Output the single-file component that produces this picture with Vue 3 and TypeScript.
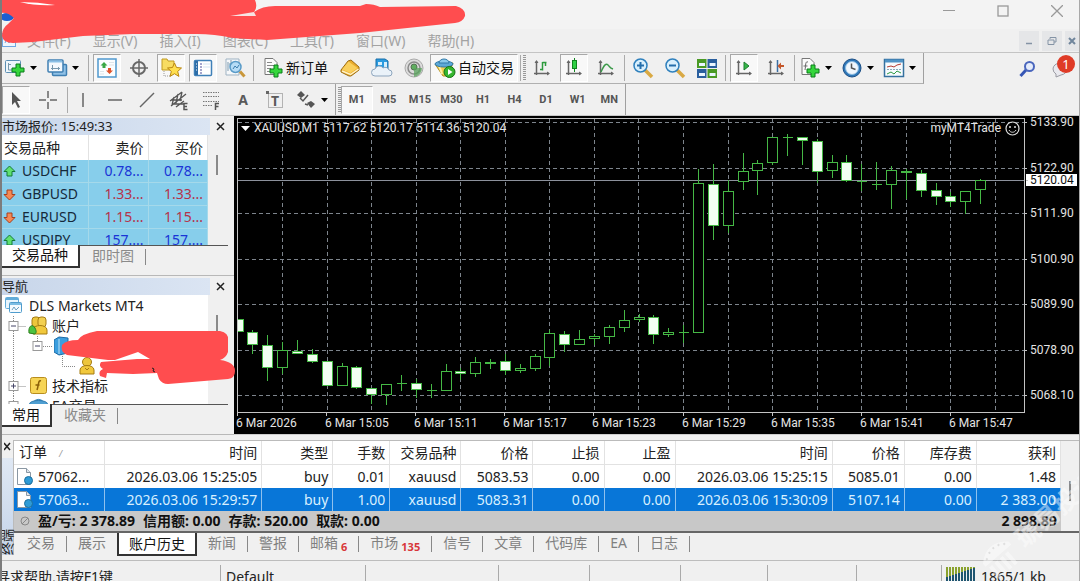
<script setup lang="ts">
interface Tool {
  id: string
  label: string
  icon?: string
  text?: string
  caret?: boolean
  pressed?: boolean
  kind?: 'sep' | 'grip'
}

const sep = (id: string): Tool => ({ id, label: '', kind: 'sep' })

const plus = (x: number, y: number) =>
  `<path d="M${x} ${y}h4v4h4v4h-4v4h-4v-4h-4v-4h4z" fill="#35d63c" stroke="#0b7d1b"/>`
const axes = '<path d="M5.500 4v14M3 16.500h15" stroke="#666" fill="none" stroke-width="1.500"/><path d="M3.500 6l2-3 2 3zM16 14.500l3 2-3 2z" fill="#666"/>'

const icons: Record<string, string> = {
  newChart: '<rect x="1.500" y="3.500" width="15" height="12" rx="1" fill="#eef6fb" stroke="#5b8fb4"/><path d="M4.500 6v7h9M4 7.500h3M11 11.500v3" stroke="#7798ad" fill="none"/>' + plus(12, 7),
  profiles: '<rect x="6.500" y="7.500" width="14" height="11" rx="1" fill="#8fc0e6" stroke="#3f7fb2" stroke-width="1.500"/><rect x="2" y="3" width="15" height="12" rx="1" fill="#f4f9fd" stroke="#3f7fb2" stroke-width="1.500"/><path d="M3 4.500h13" stroke="#8bc0e6" stroke-width="2"/><path d="M5 11.500h9M6.500 8v5M12.500 10v3" stroke="#7798ad"/>',
  market: '<rect x="2" y="2" width="18" height="18" fill="#fafdff" stroke="#4f98ce" stroke-width="1.500"/><path d="M8 5l3.500 3.500H9.500V11h-3V8.500H4.500z" fill="#38a745"/><path d="M13.500 17L10 13.500h2V11h3v2.500h2z" fill="#e0532b"/><path d="M4 14.500h4M4 17h4M13 5.500h5M13 8h5" stroke="#dde4e9"/>',
  cross: '<circle cx="11" cy="11" r="6" fill="none" stroke="#686868" stroke-width="2"/><path d="M11 2v18M2 11h18" stroke="#686868" stroke-width="1.500"/>',
  folderStar: '<path d="M2 2h5l1 2h6v9H2z" fill="#f7dc62" stroke="#c09a22"/><path d="M4 14v5h6" stroke="#999" fill="none" stroke-dasharray="1 1"/><path d="M14.500 6l2 4.500 5 .5-3.800 3.400 1.200 5-4.400-2.700-4.400 2.700 1.200-5L7.500 11l5-.5z" fill="#ffdf4e" stroke="#b98611"/>',
  terminal: '<rect x="2.500" y="3.500" width="17" height="15" rx="1" fill="#fff" stroke="#3f80b8" stroke-width="1.500"/><path d="M4.500 4v14" stroke="#2d6ea9" stroke-width="3"/><path d="M4 7h1M4 10h1M4 13h1" stroke="#fff"/><path d="M8 7h2M8 10h2M8 13h2M8 16h2" stroke="#4c4c9a"/><path d="M11 7h7M11 10h7" stroke="#d3e4f1"/>',
  tester: '<path d="M2 2h13v16H2z" fill="#f6f8fa" stroke="#9fb3c3"/><path d="M4 5v9M7 3v8M5 7h4" stroke="#7d99ad"/><circle cx="11.500" cy="10" r="5.500" fill="#b6dcf6" stroke="#5a9bc8" stroke-width="1.500"/><path d="M9 12l2-3 2 2 2-3" stroke="#3d7fae" fill="none"/><path d="M16 14.500l4.500 5" stroke="#c9973a" stroke-width="3"/>',
  order: '<path d="M3 1.500h8l4 4v12H3z" fill="#fbfbfb" stroke="#777"/><path d="M5 5.500h5M5 8.500h7M5 11.500h4M5 14.500h3" stroke="#888"/>' + plus(12, 8),
  book: '<path d="M2 13L9 4l3-1 8 7v3l-8 6-2 0-8-4z" fill="#e9ab2c" stroke="#9c6c12"/><path d="M3 12.500L9.500 4.500 18.500 11l-7 5z" fill="#f9cf5c"/><path d="M3 14l8.500 3.500L19.500 12" stroke="#fff3c9" fill="none" stroke-width="1.500"/>',
  cloud: '<path d="M5 2h9l3 2v11H5z" fill="#2a9be0" stroke="#196ea8"/><path d="M7 5h4v3H7zM13 5h3v5h-3" fill="#d7effc"/><path d="M4 19a3.500 3.500 0 0 1 0-7 4.500 4.500 0 0 1 8-1 4 4 0 0 1 6 2 3 3 0 0 1 0 6z" fill="#eaf2f9" stroke="#8da5bd"/>',
  signal: '<circle cx="11" cy="11" r="9" fill="#dcdcdc" stroke="#a9a9a9"/><circle cx="11" cy="11" r="6" fill="none" stroke="#8b8b8b" stroke-width="1.500"/><circle cx="11" cy="10" r="3" fill="#5fae5f" stroke="#557055"/><path d="M11 11v9a9 9 0 0 0 8-9z" fill="#58a35c" opacity=".75"/>',
  robot: '<path d="M1 7l18-1-5 13H9z" fill="#f4cf51" stroke="#b28e20"/><path d="M5 8l3 9" stroke="#fff0a8" stroke-width="2"/><ellipse cx="10" cy="7" rx="9" ry="3" fill="#5da9d8" stroke="#2f79a8"/><path d="M5 6a5 4 0 0 1 10 0z" fill="#8bcaed" stroke="#2f79a8"/><circle cx="15.500" cy="15" r="5.500" fill="#35b52f" stroke="#157414"/><path d="M14 12l4.500 3-4.500 3z" fill="#fff"/>',
  bars: axes + '<path d="M11.500 13.500V5M11.500 5.500h4M9 12.500h3M14.500 5v4" stroke="#2c9a3c" stroke-width="1.500" fill="none"/>',
  candles: axes + '<path d="M11.500 1v14" stroke="#11851f"/><rect x="9.500" y="3.500" width="4" height="8" fill="#2fd044" stroke="#11851f"/>',
  line: axes + '<path d="M6 15c3-7 5-9 7-7s2 3 5 4" stroke="#3d9a4b" stroke-width="1.500" fill="none"/>',
  zoomIn: '<path d="M13 13l7 7" stroke="#d9a944" stroke-width="3.500"/><circle cx="8.500" cy="8.500" r="6.500" fill="#d9f0fd" stroke="#2f80bd" stroke-width="1.500"/><path d="M8.500 5v7M5 8.500h7" stroke="#256fac" stroke-width="2"/>',
  zoomOut: '<path d="M13 13l7 7" stroke="#d9a944" stroke-width="3.500"/><circle cx="8.500" cy="8.500" r="6.500" fill="#d9f0fd" stroke="#2f80bd" stroke-width="1.500"/><path d="M5 8.500h7" stroke="#256fac" stroke-width="2"/>',
  tile: '<rect x="1" y="2" width="9.500" height="9" fill="#4a9a25"/><rect x="11.500" y="2" width="9.500" height="9" fill="#2a5f9e"/><rect x="1" y="12" width="9.500" height="9" fill="#2a5f9e"/><rect x="11.500" y="12" width="9.500" height="9" fill="#4a9a25"/><path d="M3 6h6v3H3zM13.500 6h6v3h-6zM3 16h6v3H3zM13.500 16h6v3h-6z" fill="#eaf5ff"/>',
  scroll: axes + '<path d="M11 5l5 4-5 4z" fill="#35b648" stroke="#1f7f30"/>',
  shift: axes + '<path d="M12.500 3v12" stroke="#3a6ea3" stroke-width="1.500"/><path d="M19 9h-4" stroke="#c4562a" stroke-width="2"/><path d="M16 5.500v7L12.500 9z" fill="#c4562a"/>',
  indicators: '<path d="M3 1.500h8l4 4v12H3z" fill="#fbfbfb" stroke="#777"/><path d="M9 5c-3-1-2 3-3 8M4.500 9h4" stroke="#666" fill="none"/>' + plus(12, 8),
  clock: '<circle cx="11" cy="11" r="9" fill="#2e77b8" stroke="#1c4f86"/><circle cx="11" cy="11" r="6.500" fill="#f0f7fd" stroke="#8dbce2"/><path d="M10.500 6.500V11l4 1.500" stroke="#555" stroke-width="1.500" fill="none"/>',
  template: '<rect x="1.500" y="2.500" width="19" height="17" fill="#f7fbfe" stroke="#35719f" stroke-width="1.500"/><path d="M2 4h18" stroke="#4f93c6" stroke-width="3"/><path d="M4 10l4-1 3 1 3-2 4-1" stroke="#b43b32" fill="none"/><path d="M4 12.500h14" stroke="#8ab" stroke-dasharray="2 1"/><path d="M4 17l4-2 3 2 3-3 4 2" stroke="#2f9a43" fill="none"/>',
  cursor: '<path d="M7 3v13l3-3 3 6 2-1-3-6h4z" fill="#555"/>',
  thinCross: '<path d="M11 2v7M11 13v7M2 11h7M13 11h7" stroke="#666" stroke-width="1.500"/>',
  vline: '<path d="M11 4v14" stroke="#666" stroke-width="1.500"/>',
  hline: '<path d="M4 11h14" stroke="#666" stroke-width="1.500"/>',
  trend: '<path d="M4 18L18 4" stroke="#666" stroke-width="1.500"/>',
  channel: '<path d="M2 12L14 3M3 17L18 5M8 18l8-6M6 8l-2 8M10 5L8 14M14 3l-2 9M3 11h11M5 15h11" stroke="#555" stroke-width="1.300" fill="none"/><path d="M19.500 14.500H16v6h3.500M16 17.500h3" stroke="#555" fill="none" stroke-width="1.500"/>',
  fibo: '<path d="M3 3.500h16M3 7.500h16M3 12.500h16M3 16.500h9" stroke="#777" stroke-dasharray="1.500 1"/><path d="M15.500 21v-6.500H19M15.500 17.500h3" stroke="#555" fill="none" stroke-width="1.500"/>',
  textBox: '<rect x="4.500" y="4.500" width="14" height="14" fill="none" stroke="#777" stroke-dasharray="1 1"/><rect x="2" y="2" width="3" height="3" fill="#666"/>',
  shapes: '<path d="M2 6l4-4 4 4-4 3zM12 14l4-2 4 3-4 4z" fill="#555"/><path d="M5 9l3 3 5-6M10 15l3 1" stroke="#555" fill="none" stroke-width="1.500"/>',
}

const mainTools: Tool[] = [
  { id: 'newChart', label: '新图表', icon: 'newChart', caret: true },
  { id: 'profiles', label: '配置文件', icon: 'profiles', caret: true },
  sep('s1'),
  { id: 'market', label: '市场报价', icon: 'market', pressed: true },
  { id: 'data', label: '数据窗口', icon: 'cross' },
  { id: 'nav', label: '导航', icon: 'folderStar', pressed: true },
  { id: 'term', label: '终端', icon: 'terminal', pressed: true },
  { id: 'tester', label: '策略测试', icon: 'tester' },
  sep('s2'),
  { id: 'order', label: '新订单', icon: 'order', text: '新订单' },
  { id: 'book', label: '编辑器', icon: 'book' },
  { id: 'cloud', label: '托管', icon: 'cloud' },
  { id: 'signal', label: '信号', icon: 'signal' },
  { id: 'auto', label: '自动交易', icon: 'robot', text: '自动交易', pressed: true },
  sep('s3'),
  { id: 'g1', label: '', kind: 'grip' },
  { id: 'bars', label: '柱状图', icon: 'bars' },
  { id: 'candles', label: '蜡烛图', icon: 'candles', pressed: true },
  { id: 'line', label: '折线图', icon: 'line' },
  sep('s4'),
  { id: 'zoomIn', label: '放大', icon: 'zoomIn' },
  { id: 'zoomOut', label: '缩小', icon: 'zoomOut' },
  { id: 'tile', label: '平铺窗口', icon: 'tile' },
  sep('s5'),
  { id: 'scroll', label: '自动滚动', icon: 'scroll', pressed: true },
  { id: 'shift', label: '图表平移', icon: 'shift' },
  sep('s6'),
  { id: 'indicators', label: '指标', icon: 'indicators', caret: true },
  { id: 'clock', label: '时间周期', icon: 'clock', caret: true },
  { id: 'template', label: '模板', icon: 'template', caret: true },
]

const drawTools: Tool[] = [
  { id: 'cursor', label: '光标', icon: 'cursor', pressed: true },
  { id: 'thin', label: '十字线', icon: 'thinCross' },
  sep('d1'),
  { id: 'vline', label: '垂直线', icon: 'vline' },
  { id: 'hline', label: '水平线', icon: 'hline' },
  { id: 'trend', label: '趋势线', icon: 'trend' },
  { id: 'channel', label: '通道', icon: 'channel' },
  { id: 'fibo', label: '斐波那契', icon: 'fibo' },
  { id: 'text', label: '文字', text: 'A' },
  { id: 'textBox', label: '文字标签', icon: 'textBox', text: 'T' },
  { id: 'shapes', label: '箭头', icon: 'shapes', caret: true },
]

const menus = ['文件(F)', '显示(V)', '插入(I)', '图表(C)', '工具(T)', '窗口(W)', '帮助(H)']
const frames = ['M1', 'M5', 'M15', 'M30', 'H1', 'H4', 'D1', 'W1', 'MN']

const quotes = [
  { name: 'USDCHF', up: true, bid: '0.78...', ask: '0.78...' },
  { name: 'GBPUSD', up: false, bid: '1.33...', ask: '1.33...' },
  { name: 'EURUSD', up: false, bid: '1.15...', ask: '1.15...' },
  { name: 'USDJPY', up: true, bid: '157....', ask: '157....' },
]

// Plot box in chart units
const plot = { x: 237, y: 118, w: 788, h: 295 }
const priceLine = 180

// box top, box bottom, wick top, wick bottom, filled
type Row = [number, number, number, number, 0 | 1]
const rows: Row[] = [
  [319, 332, 319, 332, 1], [332, 345, 330, 354, 1], [345, 368, 335, 381, 1], [350, 368, 342, 374, 0],
  [351, 354, 340, 354, 1], [354, 362, 349, 363, 1], [361, 386, 361, 386, 1], [366, 386, 363, 386, 0],
  [367, 388, 366, 389, 1], [388, 395, 388, 404, 1], [384, 395, 384, 405, 0], [383, 384, 375, 391, 0],
  [383, 390, 379, 398, 1], [390, 391, 384, 398, 0], [371, 391, 364, 391, 0], [371, 374, 368, 380, 1],
  [362, 374, 357, 377, 0], [362, 364, 359, 369, 1], [361, 371, 354, 375, 1], [368, 371, 364, 373, 0],
  [356, 369, 354, 371, 0], [333, 358, 330, 366, 0], [334, 345, 331, 352, 1], [339, 345, 330, 345, 0],
  [336, 339, 334, 345, 0], [327, 337, 325, 344, 0], [320, 328, 310, 332, 0], [317, 320, 314, 322, 0],
  [317, 335, 315, 344, 1], [332, 335, 328, 337, 0], [332, 333, 325, 343, 0], [183, 333, 169, 333, 0],
  [184, 226, 164, 240, 1], [191, 226, 180, 233, 0], [171, 182, 153, 190, 0], [163, 171, 160, 195, 0],
  [137, 163, 137, 165, 0], [137, 138, 134, 156, 0], [137, 141, 137, 165, 1], [141, 172, 139, 183, 1],
  [162, 171, 155, 178, 0], [162, 181, 155, 182, 1], [181, 182, 164, 191, 0], [184, 185, 162, 190, 0],
  [170, 185, 166, 209, 0], [171, 173, 169, 199, 1], [173, 191, 170, 197, 1], [190, 197, 183, 205, 1],
  [196, 202, 192, 207, 1], [191, 202, 191, 214, 0], [180, 190, 179, 204, 0],
]
const candles = rows.map((r, i) => ({
  x: Math.round(237.600 + i * 14.85),
  top: r[0],
  bottom: r[1],
  high: r[2],
  low: r[3],
  filled: r[4] === 1,
}))

const gridX = Array.from({ length: 17 }, (_, i) => Math.round(282 + i * 44.55))
const prices = ['5133.90', '5122.90', '5111.90', '5100.90', '5089.90', '5078.90', '5068.10'].map((text, i) => ({
  text,
  y: Math.round(122 + i * 45.5),
}))
const times = ['6 Mar 2026', '6 Mar 15:05', '6 Mar 15:11', '6 Mar 15:17', '6 Mar 15:23', '6 Mar 15:29', '6 Mar 15:35', '6 Mar 15:41', '6 Mar 15:47'].map((text, i) => ({
  text,
  x: Math.round(236 + i * 89.1),
}))
const topOf = (y: number) => ({ top: `${((y - plot.y) / plot.h) * 100}%` })
const leftOf = (x: number) => ({ left: `${((x - plot.x) / plot.w) * 100}%` })

const heads = ['订单', '时间', '类型', '手数', '交易品种', '价格', '止损', '止盈', '时间', '价格', '库存费', '获利']
const orders = [
  ['57062...', '2026.03.06 15:25:05', 'buy', '0.01', 'xauusd', '5083.53', '0.00', '0.00', '2026.03.06 15:25:15', '5085.01', '0.00', '1.48'],
  ['57063...', '2026.03.06 15:29:57', 'buy', '1.00', 'xauusd', '5083.31', '0.00', '0.00', '2026.03.06 15:30:09', '5107.14', '0.00', '2 383.00'],
]
const totals = ['盈/亏: 2 378.89', '信用额: 0.00', '存款: 520.00', '取款: 0.00']
const tabs: { text: string; badge?: string; active?: boolean }[] = [
  { text: '交易' }, { text: '展示' }, { text: '账户历史', active: true }, { text: '新闻' }, { text: '警报' },
  { text: '邮箱', badge: '6' }, { text: '市场', badge: '135' }, { text: '信号' }, { text: '文章' },
  { text: '代码库' }, { text: 'EA' }, { text: '日志' },
]
</script>

<template>
  <div class="window">
    <header class="titlebar">
      <svg class="applogo" width="14" height="14" viewBox="0 0 14 14" aria-hidden="true"><ellipse cx="5" cy="7" rx="7" ry="4" fill="#1d5fd0" /></svg>
      <div class="winbtns">
        <button aria-label="最小化"><svg width="12" height="12"><path d="M0 5.500h12" stroke="#999" /></svg></button>
        <button aria-label="最大化"><svg width="12" height="12"><rect x="1" y="1" width="10" height="10" fill="none" stroke="#999" stroke-width="1.300" /></svg></button>
        <button aria-label="关闭"><svg width="12" height="12"><path d="M0 0l12 12M12 0L0 12" stroke="#999" stroke-width="1.300" /></svg></button>
      </div>
    </header>

    <nav class="menubar">
      <svg width="15" height="15" viewBox="0 0 15 15" aria-hidden="true"><rect x=".5" y=".5" width="13" height="13" fill="#eef5fd" stroke="#6fa6e0" /><path d="M3 10l2-5 2 5 2-5 2 5" stroke="#6fa6e0" fill="none" /></svg>
      <button v-for="m in menus" :key="m" class="menu">{{ m }}</button>
      <div class="mdi">
        <button aria-label="最小化图表"><svg width="10" height="10"><path d="M2 7.500h6" stroke="#8493a5" stroke-width="1.500" /></svg></button>
        <button aria-label="还原图表"><svg width="10" height="10"><path d="M3 3V1.500h6V6H7M1 4h6v4.500H1z" fill="none" stroke="#8493a5" /></svg></button>
        <button aria-label="关闭图表"><svg width="10" height="10"><path d="M2 2l6 6M8 2L2 8" stroke="#71869c" stroke-width="2" /></svg></button>
      </div>
    </nav>

    <div class="toolrow">
      <div class="toolbar main">
        <template v-for="t in mainTools" :key="t.id">
          <span v-if="t.kind" :class="t.kind"></span>
          <button v-else class="tool" :class="{ pressed: t.pressed, wide: t.caret, labelled: t.text }" :aria-label="t.label">
            <svg width="22" height="22" viewBox="0 0 22 22" v-html="icons[t.icon!]"></svg>
            <span v-if="t.text">{{ t.text }}</span>
            <svg v-if="t.caret" class="caret" width="7" height="4" viewBox="0 0 7 4"><path d="M0 0h7L3.500 4z" /></svg>
          </button>
        </template>
      </div>
      <div class="right">
        <button class="flat" aria-label="搜索"><svg width="18" height="18" viewBox="0 0 18 18"><path d="M7 10l-5.500 6" stroke="#3656b5" stroke-width="3" /><circle cx="10.500" cy="6.500" r="4.500" fill="#e5ecfb" stroke="#4a66bd" stroke-width="2" /></svg></button>
        <button class="flat chat" aria-label="消息">
          <svg width="20" height="18" viewBox="0 0 20 18"><path d="M2 9a7 6 0 1 1 8 6l-5 2 0-3a6 6 0 0 1-3-5z" fill="#e9e9ee" stroke="#9a9aa2" /></svg>
          <span class="count">1</span>
        </button>
      </div>
    </div>

    <div class="toolrow second">
      <div class="toolbar draw">
        <template v-for="t in drawTools" :key="t.id">
          <span v-if="t.kind" :class="t.kind"></span>
          <button v-else class="tool" :class="{ pressed: t.pressed, wide: t.caret }" :aria-label="t.label">
            <svg v-if="t.icon" width="22" height="22" viewBox="0 0 22 22" v-html="icons[t.icon]"></svg>
            <span v-if="t.text" class="letter" :class="{ over: t.icon }">{{ t.text }}</span>
            <svg v-if="t.caret" class="caret" width="7" height="4" viewBox="0 0 7 4"><path d="M0 0h7L3.500 4z" /></svg>
          </button>
        </template>
      </div>
      <div class="toolbar frames">
        <span class="grip"></span>
        <div class="framelist">
          <button v-for="(f, i) in frames" :key="f" class="frame" :class="{ pressed: i === 0 }">{{ f }}</button>
        </div>
      </div>
    </div>

    <main class="middle">
      <aside class="side">
        <section class="panel">
          <div class="ptitle">
            <h2>市场报价: 15:49:33</h2>
            <button aria-label="关闭市场报价"><svg width="9" height="9"><path d="M1 1l7 7M8 1L1 8" stroke="#222" stroke-width="1.500" /></svg></button>
          </div>
          <div class="pbody">
            <table class="quotes">
              <colgroup><col class="qname" /><col /><col /></colgroup>
              <thead>
                <tr><th>交易品种</th><th>卖价</th><th>买价</th></tr>
              </thead>
              <tbody>
                <tr v-for="q in quotes" :key="q.name" :class="q.up ? 'up' : 'down'">
                  <td>
                    <svg width="13" height="13" viewBox="0 0 13 13" aria-hidden="true">
                      <path v-if="q.up" d="M6.500 1L12 6.500H9V11H4V6.500H1z" fill="#5fe070" stroke="#137a35" />
                      <path v-else d="M6.500 12L1 6.500h3V2h5v4.500h3z" fill="#f58a55" stroke="#a83e1c" />
                    </svg>
                    <span>{{ q.name }}</span>
                  </td>
                  <td>{{ q.bid }}</td>
                  <td>{{ q.ask }}</td>
                </tr>
              </tbody>
            </table>
            <div class="gutter"><span class="thumb"></span></div>
          </div>
          <div class="ptabs">
            <button class="active">交易品种</button>
            <button>即时图</button>
          </div>
        </section>

        <section class="panel">
          <div class="ptitle">
            <h2>导航</h2>
            <button aria-label="关闭导航"><svg width="9" height="9"><path d="M1 1l7 7M8 1L1 8" stroke="#222" stroke-width="1.500" /></svg></button>
          </div>
          <div class="pbody">
            <ul class="tree">
              <li>
                <svg width="20" height="20" viewBox="0 0 20 20"><rect x="1.500" y="1.500" width="13" height="11" rx="1" fill="#e8f5fd" stroke="#62acd9" /><path d="M2 3h12" stroke="#62acd9" stroke-width="2" /><rect x="5.500" y="6.500" width="12" height="10" rx="1" fill="#f4fafe" stroke="#4f9ccd" /><path d="M6 8h11" stroke="#7cbde3" stroke-width="2" /><path d="M8 14l2-3 2 3 3-3" stroke="#6d9fbf" fill="none" /></svg>
                <span>DLS Markets MT4</span>
              </li>
              <li class="l1">
                <svg width="18" height="20" viewBox="0 0 18 20"><path d="M5.500 0v5M5.500 15v5M10.500 10.500H18" stroke="#888" stroke-dasharray="1 1" /><rect x="1" y="5.500" width="9" height="9" fill="#fff" stroke="#999" /><path d="M3 10h5" stroke="#446" /></svg>
                <svg width="22" height="20" viewBox="0 0 22 20"><rect x="4" y="1" width="8" height="10" rx="3" fill="#edc63c" stroke="#a57c12" /><rect x="10" y="1" width="8" height="10" rx="3" fill="#f3d050" stroke="#a57c12" /><path d="M5 18v-4c0-6 14-6 14 0v4z" fill="#f1c83c" stroke="#a57c12" /><path d="M1 17c-1-8 4-9 6-5s1 5 0 6z" fill="#4cc240" stroke="#2b7d1c" /></svg>
                <span>账户</span>
              </li>
              <li class="l1 l2">
                <svg width="46" height="20" viewBox="0 0 46 20"><path d="M5.500 0v20M29.500 0v6M35 10.500h9" stroke="#888" stroke-dasharray="1 1" fill="none" /><rect x="25" y="5.500" width="9" height="9" fill="#fff" stroke="#999" /><path d="M27 10h5" stroke="#446" /></svg>
                <svg width="18" height="20" viewBox="0 0 18 20"><path d="M0 4l5-3 9 1v15l-9 2-5-3z" fill="#3b9ede" stroke="#1b6aa6" /><path d="M5 3v15" stroke="#bfe2f7" /></svg>
              </li>
              <li class="l1 l2">
                <svg width="70" height="20" viewBox="0 0 70 20"><path d="M5.500 0v20M54.500 0v10.500H68" stroke="#888" stroke-dasharray="1 1" fill="none" /></svg>
                <svg width="18" height="20" viewBox="0 0 18 20"><circle cx="9" cy="6" r="4.500" fill="#edc63c" stroke="#a57c12" /><path d="M2 18v-4c0-6 14-6 14 0v4z" fill="#f1c83c" stroke="#a57c12" /><path d="M7 12l2 2 2-2" stroke="#a57c12" fill="none" /></svg>
              </li>
              <li class="l1">
                <svg width="18" height="20" viewBox="0 0 18 20"><path d="M5.500 0v5M5.500 15v5M10.500 10.500H18" stroke="#888" stroke-dasharray="1 1" /><rect x="1" y="5.500" width="9" height="9" fill="#fff" stroke="#999" /><path d="M3 10h5M5.500 7.500v5" stroke="#446" /></svg>
                <svg width="22" height="20" viewBox="0 0 22 20"><rect x="2.500" y="1.500" width="16" height="16" rx="2" fill="#f6d455" stroke="#b88d1d" /><path d="M13 5c-3-1-2 3-4 9M7.500 9h4" stroke="#8a5f08" stroke-width="1.500" fill="none" /></svg>
                <span>技术指标</span>
              </li>
              <li class="l1">
                <svg width="18" height="20" viewBox="0 0 18 20"><path d="M5.500 0v5M10.500 10.500H18" stroke="#888" stroke-dasharray="1 1" /><rect x="1" y="5.500" width="9" height="9" fill="#fff" stroke="#999" /></svg>
                <svg width="22" height="20" viewBox="0 0 22 20"><path d="M5 7a6 6 0 0 1 11 0z" fill="#69b5e4" stroke="#2d7bb0" /><ellipse cx="10.500" cy="8" rx="9" ry="3.500" fill="#4f9fd2" stroke="#2d7bb0" /></svg>
                <span>EA交易</span>
              </li>
            </ul>
            <div class="gutter"><span class="thumb"></span></div>
          </div>
          <div class="ptabs">
            <button class="active">常用</button>
            <button>收藏夹</button>
          </div>
        </section>
      </aside>

      <section class="chart">
        <div class="plot">
          <svg class="plotsvg" :viewBox="`${plot.x} ${plot.y} ${plot.w} ${plot.h}`" preserveAspectRatio="none" aria-label="XAUUSD M1">
            <g class="grid">
              <path v-for="x in gridX" :key="x" :d="`M${x + 0.5} 119V412`" />
              <path v-for="p in prices" :key="p.y" :d="`M238 ${p.y + 0.5}H1024`" />
            </g>
            <path class="bid" :d="`M238 ${priceLine + 0.5}H1024`" />
            <g v-for="c in candles" :key="c.x" class="candle">
              <path :d="`M${c.x + 0.5} ${c.high}V${c.low}`" />
              <path v-if="c.bottom - c.top < 2" :d="`M${c.x - 4.5} ${c.top + 0.5}h10`" />
              <rect v-else :class="{ filled: c.filled }" :x="c.x - 4.5" :y="c.top + 0.5" width="10" :height="c.bottom - c.top - 1" />
            </g>
            <rect class="edge" x="237.5" y="118.5" width="787" height="294" />
          </svg>
          <div class="cap">
            <svg width="9" height="5" viewBox="0 0 9 5"><path d="M0 0h9L4.500 5z" fill="#fff" /></svg>
            <span>XAUUSD,M1</span>
            <span>5117.62 5120.17 5114.36 5120.04</span>
            <span class="expert">myMT4Trade</span>
            <svg width="15" height="15" viewBox="0 0 15 15"><circle cx="7.500" cy="7.500" r="6.500" fill="none" stroke="#ddd" stroke-width="1.200" /><path d="M5 5v2M10 5v2" stroke="#ddd" stroke-width="1.500" /><path d="M4 9c1.500 3 5.500 3 7 0" stroke="#ddd" fill="none" /></svg>
          </div>
        </div>
        <div class="paxis">
          <span v-for="p in prices" :key="p.text" class="plabel" :style="topOf(p.y)">{{ p.text }}</span>
          <span class="plabel now" :style="topOf(priceLine)">5120.04</span>
        </div>
        <div class="taxis">
          <span v-for="t in times" :key="t.text" class="tlabel" :style="leftOf(t.x)">{{ t.text }}</span>
        </div>
      </section>
    </main>

    <section class="terminal">
      <div class="strip">
        <button aria-label="关闭终端"><svg width="8" height="9"><path d="M0 1l6 7M6 1L0 8" stroke="#222" stroke-width="1.500" /></svg></button>
        <span>终端</span>
      </div>
      <div class="tmain">
        <div class="tarea">
          <table class="orders">
            <colgroup>
              <col class="w92" /><col class="w157" /><col class="w71" /><col class="w57" /><col class="w71" /><col class="w72" />
              <col class="w71" /><col class="w71" /><col class="w157" /><col class="w72" /><col class="w72" /><col class="w84" />
            </colgroup>
            <thead>
              <tr>
                <th v-for="(h, i) in heads" :key="i">{{ h }}<i v-if="i === 0">/</i></th>
              </tr>
            </thead>
            <tbody>
              <tr v-for="(o, r) in orders" :key="r" :class="{ selected: r === 1 }">
                <td v-for="(c, i) in o" :key="i">
                  <svg v-if="i === 0" width="18" height="19" viewBox="0 0 18 19" aria-hidden="true"><path d="M1.500 1.500h9l4 4v12h-13z" fill="#fff" stroke="#8a97a3" /><path d="M10.500 1.500v4h4" fill="#dde5ec" stroke="#8a97a3" /><circle cx="12.500" cy="13.500" r="4" fill="#2e9bd6" stroke="#1b6f9f" /></svg>
                  <span>{{ c }}</span>
                </td>
              </tr>
            </tbody>
            <tfoot>
              <tr>
                <td colspan="11">
                  <div class="sum">
                    <svg width="10" height="10" viewBox="0 0 10 10" aria-hidden="true"><circle cx="5" cy="5" r="4" fill="none" stroke="#888" /><path d="M2 8l6-6" stroke="#888" /></svg>
                    <span v-for="t in totals" :key="t">{{ t }}</span>
                  </div>
                </td>
                <td>2 898.89</td>
              </tr>
            </tfoot>
          </table>
          <div class="gutter"><span class="thumb"></span></div>
        </div>
        <div class="ttabs">
          <button v-for="t in tabs" :key="t.text" :class="{ active: t.active }">{{ t.text }}<b v-if="t.badge">{{ t.badge }}</b></button>
        </div>
      </div>
    </section>

    <footer class="status">
      <span class="help">寻求帮助,请按F1键</span>
      <span class="profile">Default</span>
      <span class="c133"></span><span class="c91"></span><span class="c91"></span><span class="c87"></span><span class="c89"></span><span class="c85"></span>
      <span class="net">
        <svg width="30" height="18" viewBox="0 0 30 18" aria-hidden="true">
          <g v-for="i in 10" :key="i">
            <rect :x="i * 3 - 3" y="0" width="2" height="18" fill="#8aa22e" />
            <rect :x="i * 3 - 3" :y="11 - i" width="2" :height="8 + i" fill="#1f5570" />
          </g>
        </svg>
        1865/1 kb
      </span>
    </footer>

    <svg class="marks" width="470" height="46" viewBox="0 0 470 46" aria-hidden="true">
      <path d="M0 0H255Q258 7 254 12Q262 6 275 6L360 6L366 4Q374 4 380 7L456 6Q466 9 465 16Q463 22 455 23L360 33L267 40Q248 39 233 38Q214 34 197 34L133 34L83 36L33 42L13 43Q3 43 2 36Q2 28 8 24L14 18Q8 12 0 13Z" fill="#ff4d4f" />
      <path d="M20 2Q36 6 55 5Q38 2 20 2Z" fill="#fff" />
      <path d="M230 16L254 12L256 16Z" fill="#f7e4e4" />
    </svg>
    <svg class="marks tree-marks" width="180" height="58" viewBox="58 328 180 58" aria-hidden="true">
      <path d="M62 345Q66 340 78 340Q81 334 97 331H220Q229 333 228 340V352Q226 358 220 360Q235 362 235 371Q235 378 228 379L168 384Q162 384 159 379L157 373L133 374L107 373L106 378L100 376Q98 371 103 369Q98 366 101 362L137 359L150 359L138 352L115 360H108L67 355Q60 352 62 345Z" fill="#ff4d4f" />
      <path d="M152 368l2 1-1 2 2 1" stroke="#222" fill="none" />
    </svg>
    <div class="watermark" aria-hidden="true">
      <svg width="40" height="40" viewBox="0 0 40 40"><path d="M3 14Q20-2 37 14V18H3Z" fill="#fff" /><path d="M7 21v15M14 21v15M21 21v15M28 21v15" stroke="#fff" stroke-width="4" /><path d="M8 13h2M14 10h2M20 9h2M26 10h2M31 13h2" stroke="#ccc" stroke-width="2" /></svg>
      <span>琥易投诉</span>
    </div>
  </div>
</template>

<style>
html,
body {
  background: #f0f0f0;
}
</style>

<style scoped>
.window {
  position: relative;
  display: flex;
  flex-direction: column;
  box-sizing: border-box;
  height: 100vh;
  overflow: hidden;
  border-left: 2px solid #7c7c7c;
  border-right: 1px solid #a8a8a8;
  background: #f0f0f0;
  color: #222;
  font: 14px/20px "Noto Sans", "Noto Sans CJK SC", sans-serif;
}
.window * {
  box-sizing: border-box;
}
button {
  margin: 0;
  padding: 0;
  border: 0;
  background: none;
  color: inherit;
  font: inherit;
}
svg {
  display: block;
  flex: none;
}
.titlebar {
  flex: none;
  display: flex;
  justify-content: space-between;
  height: 29px;
  background: #f3f3f3;
}
.applogo {
  margin-top: 10px;
}
.winbtns {
  display: flex;
}
.winbtns button {
  display: grid;
  place-items: center;
  width: 54px;
  height: 22px;
}
.winbtns button:last-child {
  width: 44px;
  margin-left: 5px;
}
.menubar {
  flex: none;
  display: flex;
  align-items: center;
  gap: 22px;
  height: 23px;
  color: #a3a3a3;
}
.menubar > svg {
  margin-right: -12px;
}
.menu {
  white-space: nowrap;
}
.mdi {
  display: flex;
  gap: 3px;
  margin-left: auto;
}
.mdi button {
  display: grid;
  place-items: center;
  width: 20px;
  height: 20px;
  background: #e5e6e8;
}
.mdi button:last-child {
  width: 14px;
}
.toolrow {
  flex: none;
  display: flex;
  justify-content: space-between;
  height: 32px;
  border-top: 1px solid #c4c4c4;
}
.second {
  justify-content: flex-start;
  height: 31px;
  border: 0;
}
.toolbar {
  display: flex;
  align-items: center;
  border-right: 1px solid #a0a0a0;
}
.main {
  border-bottom: 1px solid #b0b0b0;
}
.tool {
  position: relative;
  display: flex;
  align-items: center;
  justify-content: center;
  width: 28px;
  height: 28px;
  margin: 0 2px;
  border: 1px solid transparent;
}
.tool.wide {
  justify-content: flex-start;
  gap: 4px;
  width: 42px;
  margin: 0;
  padding-left: 1px;
}
.tool.labelled {
  gap: 2px;
  width: auto;
  padding: 0 3px;
  color: #111;
}
.tool.labelled.pressed {
  margin: 0;
}
.pressed {
  border: 1px solid;
  border-color: #a8a8a8 #fff #fff #a8a8a8;
  background: #f8f8f8;
}
.sep {
  width: 1px;
  height: 26px;
  margin: 0 2px;
  background: #ababab;
}
.grip {
  width: 3px;
  height: 26px;
  background: repeating-linear-gradient(#999 0 1px, #f0f0f0 1px 2px);
}
.draw .tool {
  margin: 0 4px 0 0;
}
.draw .tool.wide {
  margin: 0;
}
.draw .sep {
  margin: 0 1px;
}
.letter {
  color: #5a5a5a;
  font: bold 14px/20px "Noto Sans", sans-serif;
}
.letter.over {
  position: absolute;
  inset: 4px 0 0;
}
.frames {
  padding-left: 2px;
}
.framelist {
  display: grid;
  grid-template-columns: repeat(9, 1fr);
  width: 284px;
}
.frame {
  height: 28px;
  color: #555;
  font: bold 11px/20px Roboto, sans-serif;
}
.right {
  display: flex;
  align-items: center;
  gap: 14px;
  padding-right: 8px;
}
.flat {
  position: relative;
}
.count {
  position: absolute;
  top: -5px;
  left: 6px;
  width: 18px;
  height: 18px;
  border-radius: 9px;
  background: #df3b27;
  color: #fff;
  font-size: 13px;
  line-height: 18px;
}
.middle {
  flex: 1;
  display: flex;
  min-height: 0;
  border-top: 1px solid #c8c8c8;
}
.side {
  flex: none;
  display: flex;
  flex-direction: column;
  width: 232px;
}
.panel {
  flex: 1;
  display: flex;
  flex-direction: column;
  min-height: 0;
  padding: 2px 6px 7px 0;
  border-bottom: 1px solid #b8b8b8;
}
.ptitle {
  flex: none;
  display: flex;
  height: 17px;
}
.ptitle h2 {
  flex: 1;
  margin: 0;
  background: linear-gradient(90deg, #c8d6ea, #dbe5f3);
  font-size: 13px;
  font-weight: 400;
  line-height: 17px;
}
.ptitle button {
  display: grid;
  place-items: center end;
  width: 18px;
  padding-right: 3px;
}
.pbody {
  flex: 1;
  display: flex;
  min-height: 0;
  overflow: hidden;
  background: #fff;
}
.gutter {
  flex: none;
  width: 20px;
  background: #f0f0f0;
}
.thumb {
  display: block;
  width: 2px;
  height: 20px;
  margin: 20px 0 0 8px;
  background: #8a8a8a;
}
table {
  table-layout: fixed;
  border-collapse: separate;
  border-spacing: 0;
}
th,
td {
  overflow: hidden;
  padding: 0 4px;
  border-right: 1px solid #e2e2e2;
  font-weight: 400;
  text-align: right;
  white-space: nowrap;
}
.quotes {
  flex: 1;
  align-self: flex-start;
  width: 206px;
}
.qname {
  width: 87px;
}
.quotes th {
  height: 25px;
}
.quotes th:first-child {
  padding: 0 2px;
  text-align: left;
}
.quotes td {
  height: 23px;
  border-color: #a5d9ea;
  border-bottom: 1px solid #a5d9ea;
  background: #87ceeb;
}
.quotes td:first-child {
  display: flex;
  align-items: center;
  gap: 6px;
  padding: 0 1px;
  color: #15293a;
}
.up td {
  color: #1a35d6;
}
.down td {
  color: #b5324a;
}
.ptabs {
  flex: none;
  display: flex;
  height: 23px;
}
.ptabs::after {
  flex: 1;
  border-top: 1px solid #555;
  content: "";
}
.ptabs button {
  position: relative;
  padding: 0 12px 3px;
  border-top: 1px solid #555;
  color: #8a8a8a;
}
.ptabs button::after {
  position: absolute;
  top: 3px;
  right: 0;
  width: 1px;
  height: 16px;
  background: #888;
  content: "";
}
.ptabs .active {
  padding: 0 10px;
  border: solid #333;
  border-width: 0 2px 2px 0;
  background: #fff;
  color: #111;
}
.ptabs .active::after {
  display: none;
}
.tree {
  flex: 1;
  margin: 0;
  padding: 1px 0 0;
  list-style: none;
}
.tree li {
  display: flex;
  align-items: center;
  gap: 5px;
  height: 20px;
  padding-left: 2px;
  white-space: nowrap;
}
.tree .l1 {
  gap: 2px;
  padding-left: 6px;
}
.tree .l2 {
  gap: 0;
}
.chart {
  flex: 1;
  display: grid;
  grid-template-columns: minmax(0, 1fr) 54px;
  grid-template-rows: minmax(0, 1fr) 21px;
  min-width: 0;
  padding: 2px 0 0 3px;
  border-bottom: 1px solid #ccc;
  background: #000;
  color: #e4e4e4;
  font: 12px/16px Roboto, sans-serif;
}
.plot {
  position: relative;
}
.plotsvg {
  position: absolute;
  width: 100%;
  height: 100%;
  shape-rendering: crispEdges;
}
.grid {
  fill: none;
  stroke: #7d848c;
  stroke-dasharray: 4 3;
}
.bid {
  stroke: #8c919c;
}
.candle {
  fill: #000;
  stroke: #45b845;
}
.candle .filled {
  fill: #f2fff2;
}
.edge {
  fill: none;
  stroke: #c4c4c4;
}
.cap {
  position: relative;
  display: flex;
  align-items: center;
  gap: 4px;
  padding: 2px 5px 0 4px;
  white-space: nowrap;
}
.expert {
  margin-left: auto;
}
.paxis,
.taxis {
  position: relative;
}
.plabel {
  position: absolute;
  right: 0;
  left: 0;
  margin-top: -6px;
  padding-left: 5px;
  line-height: 12px;
}
.plabel::before {
  position: absolute;
  top: 6px;
  left: 0;
  width: 2px;
  height: 1px;
  background: #c4c4c4;
  content: "";
}
.plabel.now {
  right: 2px;
  left: 1px;
  padding-left: 4px;
  background: #fff;
  color: #111;
}
.tlabel {
  position: absolute;
  top: 2px;
  white-space: nowrap;
}
.tlabel::before {
  position: absolute;
  top: -2px;
  left: 1px;
  width: 1px;
  height: 3px;
  background: #c4c4c4;
  content: "";
}
.terminal {
  flex: none;
  display: flex;
  height: 126px;
  padding: 5px 0;
  border-bottom: 1px solid #bdbdbd;
}
.strip {
  flex: none;
  display: flex;
  flex-direction: column;
  align-items: center;
  justify-content: space-between;
  width: 11px;
  background: linear-gradient(#f0f0f0 18px, #dfe8f4 18px, #c5d4e9);
}
.strip button {
  margin-top: 2px;
}
.strip span {
  writing-mode: vertical-rl;
  text-orientation: sideways;
  transform: rotate(180deg);
  font-size: 13px;
  line-height: 11px;
}
.tmain {
  flex: 1;
  min-width: 0;
  border-left: 1px solid #bbb;
}
.tarea {
  display: flex;
  border-top: 1px solid #bbb;
}
.orders {
  flex: 1;
  width: 100%;
  background: #fff;
}
.w57 {
  width: 57px;
}
.w71 {
  width: 71px;
}
.w72 {
  width: 72px;
}
.w84 {
  width: 84px;
}
.w92 {
  width: 91px;
}
.w157 {
  width: 157px;
}
.orders th {
  height: 24px;
  border-bottom: 1px solid #e2e2e2;
}
.orders th:first-child {
  padding-left: 5px;
  text-align: left;
}
.orders i {
  margin-left: 12px;
  color: #999;
  font-size: 9px;
}
.orders td {
  height: 23px;
}
.orders tbody td:first-child {
  display: flex;
  align-items: center;
  gap: 4px;
  padding: 0 2px;
}
.orders .selected td {
  border-color: #8fc1ee;
  background: #0876d8;
  color: #d8f0ff;
}
.orders tfoot td {
  height: 20px;
  border: 0;
  background: #c8c8c8;
  color: #111;
  font-weight: 700;
  line-height: 20px;
}
.sum {
  display: flex;
  align-items: center;
  gap: 8px;
  padding-left: 2px;
}
.tarea .gutter {
  width: 18px;
}
.tarea .thumb {
  margin-top: 40px;
}
.ttabs {
  display: flex;
  height: 25px;
  padding-left: 2px;
  border-top: 2px solid #666;
}
.ttabs button {
  position: relative;
  height: 23px;
  padding: 0 12px 3px 11px;
  color: #808080;
  white-space: nowrap;
}
.ttabs button::after {
  position: absolute;
  top: 3px;
  right: 0;
  width: 1px;
  height: 16px;
  background: #888;
  content: "";
}
.ttabs .active {
  margin-left: -1px;
  padding: 0 10px;
  border: solid #333;
  border-width: 0 2px 2px;
  background: #fff;
  color: #111;
}
.ttabs .active::after {
  display: none;
}
.ttabs b {
  position: relative;
  top: 3px;
  margin-left: 3px;
  color: #d8373a;
  font-size: 11px;
}
.status {
  flex: none;
  display: flex;
  height: 20px;
  padding-top: 4px;
  overflow: hidden;
  white-space: nowrap;
}
.status span {
  height: 20px;
  border-left: 1px solid #aaa;
  line-height: 23px;
}
.status .help {
  width: 218px;
  border: 0;
  text-indent: -6px;
}
.status .profile {
  width: 145px;
  padding-left: 5px;
}
.c133 {
  width: 133px;
}
.c91 {
  width: 91px;
}
.c87 {
  width: 87px;
}
.c89 {
  width: 89px;
}
.c85 {
  width: 85px;
}
.net {
  display: flex;
  flex: 1;
  gap: 5px;
  padding-left: 4px;
}
.net svg {
  margin-top: 2px;
}
.marks {
  position: absolute;
  top: 0;
  left: -2px;
  pointer-events: none;
}
.tree-marks {
  top: 328px;
  left: 56px;
}
.watermark {
  position: absolute;
  right: -32px;
  bottom: 38px;
  display: flex;
  align-items: center;
  gap: 4px;
  transform: rotate(-41deg);
  color: #fff;
  font-size: 25px;
  font-weight: 700;
  line-height: 40px;
  opacity: 0.45;
  pointer-events: none;
}
</style>
